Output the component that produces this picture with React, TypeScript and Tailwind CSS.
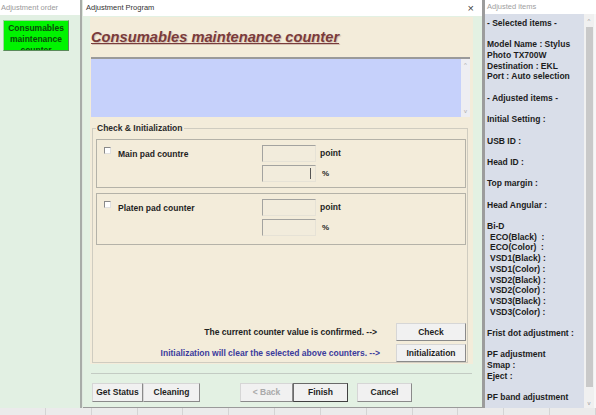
import React from 'react'

const font = { fontFamily: '"Liberation Sans", Arial, sans-serif' }

function Btn({ label, w, h = 'h-[19px]', variant }: { label: string; w: string; h?: string; variant?: 'default' | 'disabled' }) {
  const border =
    variant === 'default'
      ? 'border border-[#6a6a6a] border-r-[#404040] border-b-[#404040]'
      : 'border border-[#d6d6d6] border-r-[#8a8a8a] border-b-[#8a8a8a]'
  const text = variant === 'disabled' ? 'text-[#a9a9a9]' : 'text-[#1e1e1e]'
  return (
    <div className={`${w} ${h} bg-[#f1f1f1] ${border} ${text} flex items-center justify-center text-[8.5px] font-bold`}>
      {label}
    </div>
  )
}

function Field({ cursor }: { cursor?: boolean }) {
  return (
    <div className="relative w-[54px] h-[17px] bg-[#f2ecdc] border border-[#a3a3a0] border-r-[#e6e2d6] border-b-[#e6e2d6]">
      {cursor && <div className="absolute right-[4px] top-[2px] w-px h-[11px] bg-[#555]" />}
    </div>
  )
}

function CounterBox({ label, h, cursor }: { label: string; h: string; cursor?: boolean }) {
  return (
    <div className={`w-[370px] ${h} border border-[#b4b2a8] flex`}>
      <div className="flex items-start pt-[7px] pl-[7px] w-[165px]">
        <div className="w-[7px] h-[7px] bg-white border border-[#8a8a8a] border-r-[#e0e0e0] border-b-[#e0e0e0]" />
        <div className="ml-[7px] mt-[1px] text-[8.5px] font-bold text-[#1e1e1e]">{label}</div>
      </div>
      <div className="flex flex-col gap-[3px] pt-[5px]">
        <div className="flex items-center gap-[4px]">
          <Field />
          <span className="text-[8.5px] font-bold text-[#1e1e1e]">point</span>
        </div>
        <div className="flex items-center gap-[6px]">
          <Field cursor={cursor} />
          <span className="text-[8px] font-bold text-[#1e1e1e]">%</span>
        </div>
      </div>
    </div>
  )
}

const items: { t: string; indent?: boolean }[] = [
  { t: '- Selected items -' },
  { t: '' },
  { t: 'Model Name : Stylus' },
  { t: 'Photo TX700W' },
  { t: 'Destination : EKL' },
  { t: 'Port : Auto selection' },
  { t: '' },
  { t: '- Adjusted items -' },
  { t: '' },
  { t: 'Initial Setting :' },
  { t: '' },
  { t: 'USB ID :' },
  { t: '' },
  { t: 'Head ID :' },
  { t: '' },
  { t: 'Top margin :' },
  { t: '' },
  { t: 'Head Angular :' },
  { t: '' },
  { t: 'Bi-D' },
  { t: 'ECO(Black)  :', indent: true },
  { t: 'ECO(Color)  :', indent: true },
  { t: 'VSD1(Black) :', indent: true },
  { t: 'VSD1(Color) :', indent: true },
  { t: 'VSD2(Black) :', indent: true },
  { t: 'VSD2(Color) :', indent: true },
  { t: 'VSD3(Black) :', indent: true },
  { t: 'VSD3(Color) :', indent: true },
  { t: '' },
  { t: 'Frist dot adjustment :' },
  { t: '' },
  { t: 'PF adjustment' },
  { t: 'Smap :' },
  { t: 'Eject :' },
  { t: '' },
  { t: 'PF band adjustment' },
]

export default function App() {
  return (
    <div className="w-[596px] h-[415px] overflow-hidden bg-[#ebebeb] flex flex-col" style={font}>
      <div className="flex h-[408px]">
        {/* left: adjustment order */}
        <div className="w-[80px] flex flex-col">
          <div className="h-[15px] bg-white flex items-center pl-[1px] text-[7.5px] text-[#9a9a9a] whitespace-nowrap overflow-hidden">
            Adjustment order
          </div>
          <div className="flex-1 bg-[#e2f0e3] pt-[5px] pl-[3px]">
            <div className="w-[66px] h-[31px] bg-[#00f400] border border-[#9ad89a] border-r-[#5a8a5a] border-b-[#5a8a5a] overflow-hidden flex flex-col items-center pt-[2px] text-[8.5px] leading-[11px] font-bold text-[#0b4a0b]">
              <span>Consumables</span>
              <span>maintenance</span>
              <span>counter</span>
            </div>
          </div>
        </div>
        <div className="w-[3px] bg-[#dfe9df] border-l-2 border-[#a8aca8]" />

        {/* dialog */}
        <div className="w-[399px] flex flex-col border-b border-[#9a9a9a]">
          <div className="h-[16px] bg-white flex items-center justify-between pl-[3px] pr-[8px]">
            <span className="text-[7.5px] text-[#333]">Adjustment Program</span>
            <span className="text-[11px] leading-none text-[#444]">×</span>
          </div>
          <div className="flex-1 bg-[#e3f1e3] pt-[1px] pl-[7px]">
            <div className="w-[383px] h-[347px] bg-[#f3ecda] flex flex-col">
              <div className="h-[40px] pl-[1px] pt-[8px]">
                <span
                  className="text-[14.7px] font-bold italic underline text-[#7a3b3b] leading-[18px]"
                  style={{ textShadow: '1px 1px 1px rgba(150,110,100,0.35)' }}
                >
                  Consumables maintenance counter
                </span>
              </div>
              <div className="ml-[1px] w-[379px] h-[60px] border-t-2 border-[#9a9a9a] bg-[#c6d1fb] flex justify-end">
                <div className="w-[9px] bg-[#eeeef2] flex flex-col justify-between items-center text-[6px] text-[#aaa] leading-none py-[3px]">
                  <span>^</span>
                  <span>v</span>
                </div>
              </div>
              <div className="relative mt-[11px] ml-[2px] w-[376px] h-[235px] border border-[#cfccc0] pt-[10px] pl-[3px]">
                <div className="absolute left-[3px] -top-[6px] px-[1px] bg-[#f3ecda] text-[8.5px] font-bold leading-[11px] text-[#2a2a2a]">
                  Check &amp; Initialization
                </div>
                <div className="flex flex-col gap-[5px]">
                  <CounterBox label="Main pad countre" h="h-[49px]" cursor />
                  <CounterBox label="Platen pad counter" h="h-[52px]" />
                </div>
                <div className="mt-[78px] flex flex-col gap-[3px] items-end pr-[1px]">
                  <div className="flex items-center gap-[19px]">
                    <span className="text-[8.5px] font-bold text-[#222]">The current counter value is confirmed. --&gt;</span>
                    <Btn label="Check" w="w-[70px]" h="h-[18px]" />
                  </div>
                  <div className="flex items-center gap-[16px]">
                    <span className="text-[8.5px] font-bold text-[#3b3b9c]">Initialization will clear the selected above counters. --&gt;</span>
                    <Btn label="Initialization" w="w-[70px]" h="h-[18px]" />
                  </div>
                </div>
              </div>
            </div>
            <div className="mt-[9px] ml-[1px] w-[381px] h-px bg-[#c3cbc3]" />
            <div className="mt-[9px] ml-[2px] flex">
              <Btn label="Get Status" w="w-[51px]" />
              <Btn label="Cleaning" w="w-[57px]" />
              <div className="w-[40px]" />
              <Btn label="< Back" w="w-[53px]" variant="disabled" />
              <Btn label="Finish" w="w-[55px]" variant="default" />
              <div className="w-[9px]" />
              <Btn label="Cancel" w="w-[55px]" />
            </div>
          </div>
        </div>
        <div className="w-[3px] bg-[#9c9c9c]" />

        {/* right: adjusted items */}
        <div className="flex-1 flex flex-col">
          <div className="h-[14px] bg-white flex items-center pl-[2px] text-[7.5px] text-[#a0a0a0] whitespace-nowrap">
            Adjusted items
          </div>
          <div className="flex-1 flex bg-[#d9dee9]">
            <div className="flex-1 pl-[2px] pt-[4px] text-[8.5px] font-bold leading-[10.7px] text-[#1c1c1c] whitespace-pre overflow-hidden">
              {items.map((it, i) => (
                <div key={i} className={`h-[10.7px] ${it.indent ? 'pl-[3px]' : ''}`}>
                  {it.t}
                </div>
              ))}
            </div>
            <div className="w-[10px] bg-[#f0f0f0] flex flex-col items-center">
              <span className="text-[6px] leading-none text-[#999] pt-[4px]">^</span>
              <div className="w-[7px] h-[360px] mt-[3px] bg-[#c9c9c9]" />
              <div className="flex-1" />
              <span className="text-[6px] leading-none text-[#999] pb-[2px]">v</span>
            </div>
            <div className="w-[2px] bg-[#f7f7f7]" />
          </div>
        </div>
      </div>
      <div className="flex-1 flex">
        {Array.from({ length: 13 }, (_, i) => (
          <div key={i} className="w-[46px] h-full border-r border-[#d4d4d4]" />
        ))}
      </div>
    </div>
  )
}
